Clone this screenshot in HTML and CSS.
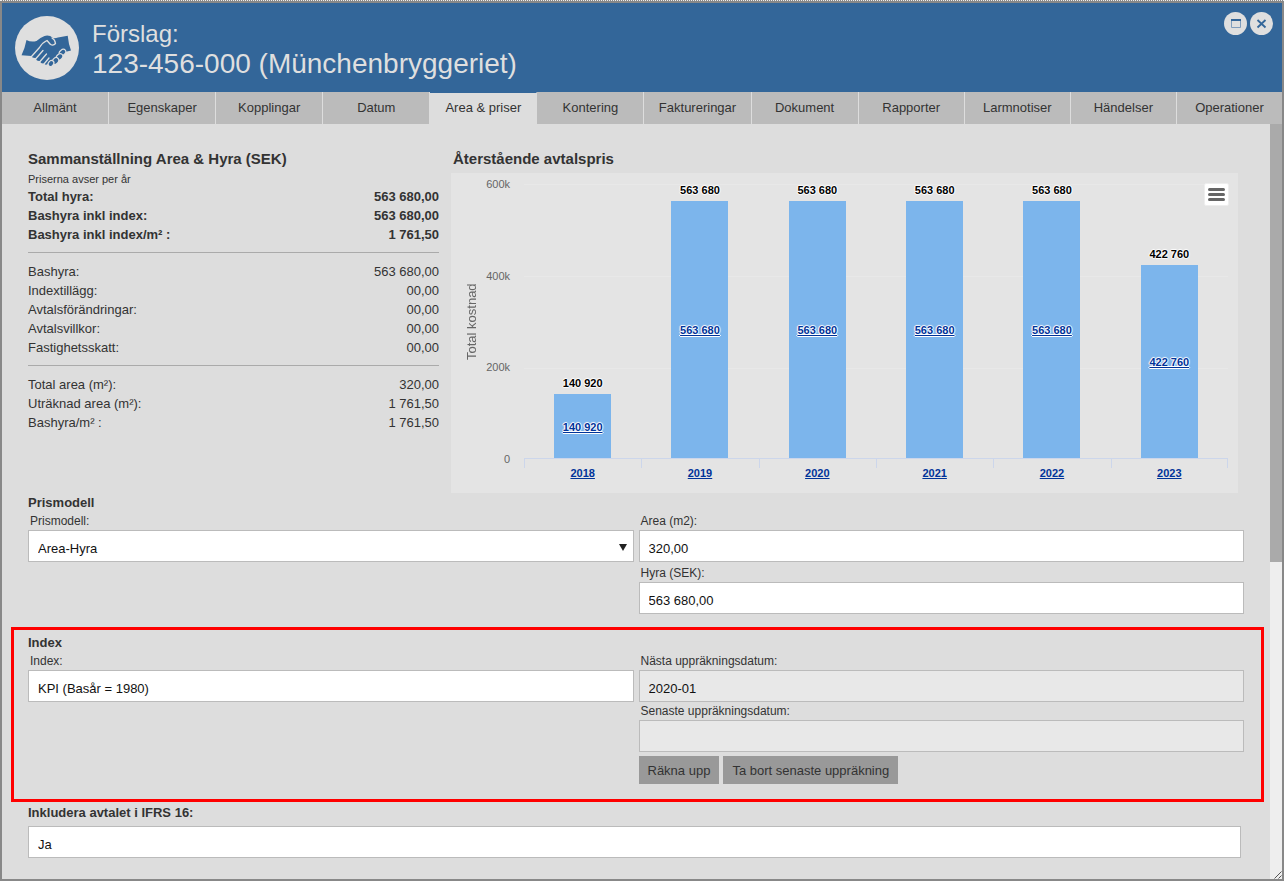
FILE: index.html
```html
<!DOCTYPE html>
<html lang="sv">
<head>
<meta charset="utf-8">
<title>Förslag: 123-456-000 (Münchenbryggeriet)</title>
<link rel="stylesheet" href="styles.css">
</head>
<body>
<div class="window">
  <header class="titlebar">
    <svg class="logo" viewBox="0 0 64 64" aria-hidden="true">
      <circle cx="32" cy="32" r="32" fill="#dfdfdf"/>
      <path fill="#336699" d="M11.500 24Q16 26.500 21.500 25Q25.500 21.500 29.500 20Q34 18.500 38 22Q40 22.500 43 21.500L52.700 19.800Q53.500 28 56 34.500L50 36L46 40L39 46L33 48Q30 49.500 29 47.500Q25.500 48 25 45Q21 45.500 21 42Q17 42.500 16.500 40L6.500 39.300Q10 32 11.500 24Z"/>
      <g fill="none" stroke="#dfdfdf" stroke-width="1.300" stroke-linecap="round" stroke-linejoin="round">
        <path d="M16.500 40.500L24.500 31.500Q27.500 26.500 32 24.500L35.500 28.500Q38.500 30 40.500 27.500Q40 23.500 37 22"/>
        <path d="M21 42.500L28 34.500M25 45.500L31.500 38M29 48L34 42"/>
      </g>
      <g fill="#336699" stroke="#dfdfdf" stroke-width="1.200">
        <ellipse cx="47.500" cy="36.500" rx="3.600" ry="2.700" transform="rotate(-40 47.500 36.500)"/>
        <ellipse cx="44.500" cy="41" rx="3.700" ry="2.800" transform="rotate(-45 44.500 41)"/>
        <ellipse cx="40.500" cy="45" rx="3.700" ry="2.800" transform="rotate(-50 40.500 45)"/>
        <ellipse cx="36" cy="47.500" rx="3.200" ry="2.600" transform="rotate(-50 36 47.500)"/>
      </g>
    </svg>
    <h1 class="title"><span class="title-kind">Förslag:</span><span>123-456-000 (Münchenbryggeriet)</span></h1>
    <div class="window-buttons">
      <button class="round" type="button" aria-label="Maximera"><svg viewBox="0 0 23 23"><path d="M7.500 8.500V15.500H16.500V8.500" fill="none" stroke="#7f9dbd"/><path d="M7 8H17" stroke="#336699" stroke-width="2"/></svg></button>
      <button class="round" type="button" aria-label="Stäng"><svg viewBox="0 0 23 23"><path d="M7.500 8L15.500 15.500M15.500 8L7.500 15.500" stroke="#336699" stroke-width="1.800"/></svg></button>
    </div>
  </header>
  <nav class="tabs">
    <a href="#">Allmänt</a><a href="#">Egenskaper</a><a href="#">Kopplingar</a><a href="#">Datum</a><a href="#" class="active" aria-current="page">Area &amp; priser</a><a href="#">Kontering</a><a href="#">Faktureringar</a><a href="#">Dokument</a><a href="#" class="narrow">Rapporter</a><a href="#" class="narrow">Larmnotiser</a><a href="#" class="narrow">Händelser</a><a href="#" class="narrow">Operationer</a>
  </nav>
  <div class="body">
    <main class="content">
      <div class="overview">
        <section class="summary">
          <h2>Sammanställning Area &amp; Hyra (SEK)</h2>
          <p class="note">Priserna avser per år</p>
          <dl class="strong">
            <div><dt>Total hyra:</dt><dd>563 680,00</dd></div>
            <div><dt>Bashyra inkl index:</dt><dd>563 680,00</dd></div>
            <div><dt>Bashyra inkl index/m² :</dt><dd>1 761,50</dd></div>
          </dl>
          <dl>
            <div><dt>Bashyra:</dt><dd>563 680,00</dd></div>
            <div><dt>Indextillägg:</dt><dd>00,00</dd></div>
            <div><dt>Avtalsförändringar:</dt><dd>00,00</dd></div>
            <div><dt>Avtalsvillkor:</dt><dd>00,00</dd></div>
            <div><dt>Fastighetsskatt:</dt><dd>00,00</dd></div>
          </dl>
          <dl>
            <div><dt>Total area (m²):</dt><dd>320,00</dd></div>
            <div><dt>Uträknad area (m²):</dt><dd>1 761,50</dd></div>
            <div><dt>Bashyra/m² :</dt><dd>1 761,50</dd></div>
          </dl>
        </section>
        <section class="price">
          <h2>Återstående avtalspris</h2>
          <div class="chart">
            <div class="y-title">Total kostnad</div>
            <div class="y-labels"><span>600k</span><span>400k</span><span>200k</span><span>0</span></div>
            <div class="plot-area">
              <div class="plot">
                <div class="col"><span>140 920</span><div class="bar" style="height:23.49%"><a href="#">140 920</a></div></div>
                <div class="col"><span>563 680</span><div class="bar" style="height:93.95%"><a href="#">563 680</a></div></div>
                <div class="col"><span>563 680</span><div class="bar" style="height:93.95%"><a href="#">563 680</a></div></div>
                <div class="col"><span>563 680</span><div class="bar" style="height:93.95%"><a href="#">563 680</a></div></div>
                <div class="col"><span>563 680</span><div class="bar" style="height:93.95%"><a href="#">563 680</a></div></div>
                <div class="col"><span>422 760</span><div class="bar" style="height:70.46%"><a href="#">422 760</a></div></div>
              </div>
              <div class="x-axis"><a href="#">2018</a><a href="#">2019</a><a href="#">2020</a><a href="#">2021</a><a href="#">2022</a><a href="#">2023</a></div>
            </div>
            <button class="chart-menu" type="button" aria-label="Diagrammeny"><svg viewBox="0 0 23 21"><path d="M4.500 5.500H18.500M4.500 10.500H18.500M4.500 15.500H18.500" stroke="#666" stroke-width="3" stroke-linecap="round"/></svg></button>
          </div>
        </section>
      </div>

      <section class="group">
        <h3>Prismodell</h3>
        <div class="fields">
          <div class="stack">
            <div class="field"><label for="model">Prismodell:</label>
              <div class="select"><select id="model"><option>Area-Hyra</option></select><svg viewBox="0 0 8 7" aria-hidden="true"><path d="M0 0H8L4 7Z" fill="#222"/></svg></div></div>
          </div>
          <div class="stack spaced">
            <div class="field"><label for="area">Area (m2):</label><input id="area" type="text" value="320,00"></div>
            <div class="field"><label for="rent">Hyra (SEK):</label><input id="rent" type="text" value="563 680,00"></div>
          </div>
        </div>
      </section>

      <section class="group marked">
        <h3>Index</h3>
        <div class="fields">
          <div class="stack">
            <div class="field"><label for="index">Index:</label><input id="index" type="text" value="KPI (Basår = 1980)"></div>
          </div>
          <div class="stack">
            <div class="field"><label for="next">Nästa uppräkningsdatum:</label><input id="next" type="text" value="2020-01" readonly></div>
            <div class="field"><label for="last">Senaste uppräkningsdatum:</label><input id="last" type="text" value="" readonly></div>
            <div class="actions"><button type="button">Räkna upp</button><button type="button">Ta bort senaste uppräkning</button></div>
          </div>
        </div>
      </section>

      <section class="group ifrs">
        <label class="heading" for="ifrs">Inkludera avtalet i IFRS 16:</label>
        <input id="ifrs" type="text" value="Ja">
      </section>
    </main>
    <div class="scrollbar" aria-hidden="true">
      <div class="thumb"></div>
      <svg class="grip" viewBox="0 0 8 8"><path d="M0.500 7.500L7.500 0.500M4.500 7.500L7.500 4.500" stroke="#555"/></svg>
    </div>
  </div>
</div>
</body>
</html>
```
FILE: styles.css
```css
* { box-sizing: border-box; }
body { margin: 0; font: 13px/19px "Liberation Sans", Arial, sans-serif; color: #333; background: #888; }
h1, h2, h3, p, dl, dd { margin: 0; }
button, input, select { font: inherit; color: inherit; }

.window { min-height: 100vh; display: flex; flex-direction: column; padding: 3px 2px 2px; background: #888; position: relative; }
.window::before { content: ""; position: absolute; left: 0; right: 0; top: 0; border-top: 1px dotted #eee; }

.titlebar { display: flex; align-items: flex-start; gap: 13px; min-height: 89px; padding: 13px 10px 12px 13px; background: #336699; color: #dfdfdf; }
.logo { width: 64px; height: 64px; flex: none; }
.title { flex: 1; padding-top: 4px; font-size: 28px; line-height: 31px; font-weight: normal; }
.title span { display: block; }
.title .title-kind { font-size: 24px; line-height: 28px; }
.window-buttons { display: flex; gap: 3px; margin: -4px -1px 0 0; }
.round { width: 23px; height: 23px; padding: 0; border: 0; border-radius: 50%; background: #dfdfdf; }
.round svg { display: block; width: 23px; height: 23px; }

.tabs { display: flex; background: #bbb; }
.tabs a { flex: 107 1 0; height: 32px; line-height: 31px; text-align: center; color: #333; text-decoration: none; border-right: 1px solid #ddd; }
.tabs .narrow { flex-grow: 106; }
.tabs a:last-child { border-right: 0; }
.tabs .active { background: #ddd; border-top: 1px solid #336699; line-height: 29px; }

.body { flex: 1; display: flex; background: #ddd; }
.content { flex: 1; min-width: 0; padding: 26px 6px 21px 9px; }

.overview { display: grid; grid-template-columns: 411px 1fr; gap: 12px; padding: 0 26px 0 17px; }
h2 { font-size: 15px; line-height: 18px; }
.price h2 { padding-left: 2px; }
.note { font-size: 11px; line-height: 15px; padding-top: 4px; }
.summary dl + dl { border-top: 1px solid #aaa; margin-top: 8px; padding-top: 9px; }
.summary dl div { display: flex; justify-content: space-between; }
.strong { font-weight: bold; }

.chart { position: relative; display: flex; margin-top: 5px; height: 320px; padding: 4px 10px 0 14px; background: #e4e4e4; color: #666; }
.y-title { writing-mode: vertical-rl; transform: rotate(180deg); width: 14px; height: 289px; line-height: 14px; font-size: 13px; text-align: center; }
.y-labels { display: flex; flex-direction: column; justify-content: space-between; width: 45px; height: 289px; padding-right: 14px; text-align: right; font-size: 11px; line-height: 14px; }
.plot-area { flex: 1; padding-top: 7px; font-size: 11px; line-height: 14px; font-weight: bold; }
.plot { display: flex; height: 274px; background: repeating-linear-gradient(#e8e8e8 0 1px, transparent 1px 92px); }
.col { flex: 1; display: flex; flex-direction: column; justify-content: flex-end; align-items: center; color: #000; }
.col span, .bar a { text-shadow: 0 0 1px #fff, 1px 0 1px #fff, -1px 0 1px #fff, 0 1px 1px #fff, 0 -1px 1px #fff; }
.col span { flex: none; margin-bottom: 4px; }
.bar { flex: none; display: flex; justify-content: center; align-items: center; width: 57px; padding-top: 2px; background: #7cb5ec; }
.bar a, .x-axis a { color: #003399; }
.x-axis { display: flex; border-top: 1px solid #ccd6eb; background: linear-gradient(#ccd6eb, #ccd6eb) right top / 1px 9px no-repeat; }
.x-axis a { flex: 1; padding-top: 7px; text-align: center; background: linear-gradient(#ccd6eb, #ccd6eb) left top / 1px 9px no-repeat; }
.chart-menu { position: absolute; top: 10px; right: 9px; width: 25px; height: 23px; padding: 0; border: 1px solid #eee; border-radius: 2px; background: #fff; }
.chart-menu svg { display: block; width: 23px; height: 21px; }

.group { padding: 0 20px 0 17px; }
h3, .heading { display: block; font-size: 13px; line-height: 19px; font-weight: bold; }
.fields { display: grid; grid-template-columns: 1fr 1fr; gap: 5px; }
.field label { display: block; padding-left: 2px; font-size: 12px; line-height: 18px; }
.spaced { display: grid; gap: 2px; }
input, select { display: block; width: 100%; height: 32px; margin: 0; padding: 4px 9px 0; border: 1px solid #bbb; border-radius: 0; background: #fff; color: #111; outline: 0; }
select { appearance: none; }
input[readonly] { background: #e8e8e8; }
.select { position: relative; }
.select svg { position: absolute; right: 7px; top: 14px; width: 8px; height: 7px; }

.marked { margin-top: 13px; padding: 3px 17px 15px 14px; border: 3px solid #f00; }
.actions { display: flex; gap: 4px; padding-top: 4px; }
.actions button { height: 28px; padding: 0 9px; border: 0; background: #999; color: #333; }

.ifrs { padding-top: 1px; padding-right: 23px; }
.ifrs input { margin-top: 4px; }

.scrollbar { display: flex; flex-direction: column; justify-content: space-between; align-items: flex-end; width: 12px; background: #eee; }
.thumb { width: 12px; height: 58%; background: #aaa; }
.grip { width: 8px; height: 8px; }
```
